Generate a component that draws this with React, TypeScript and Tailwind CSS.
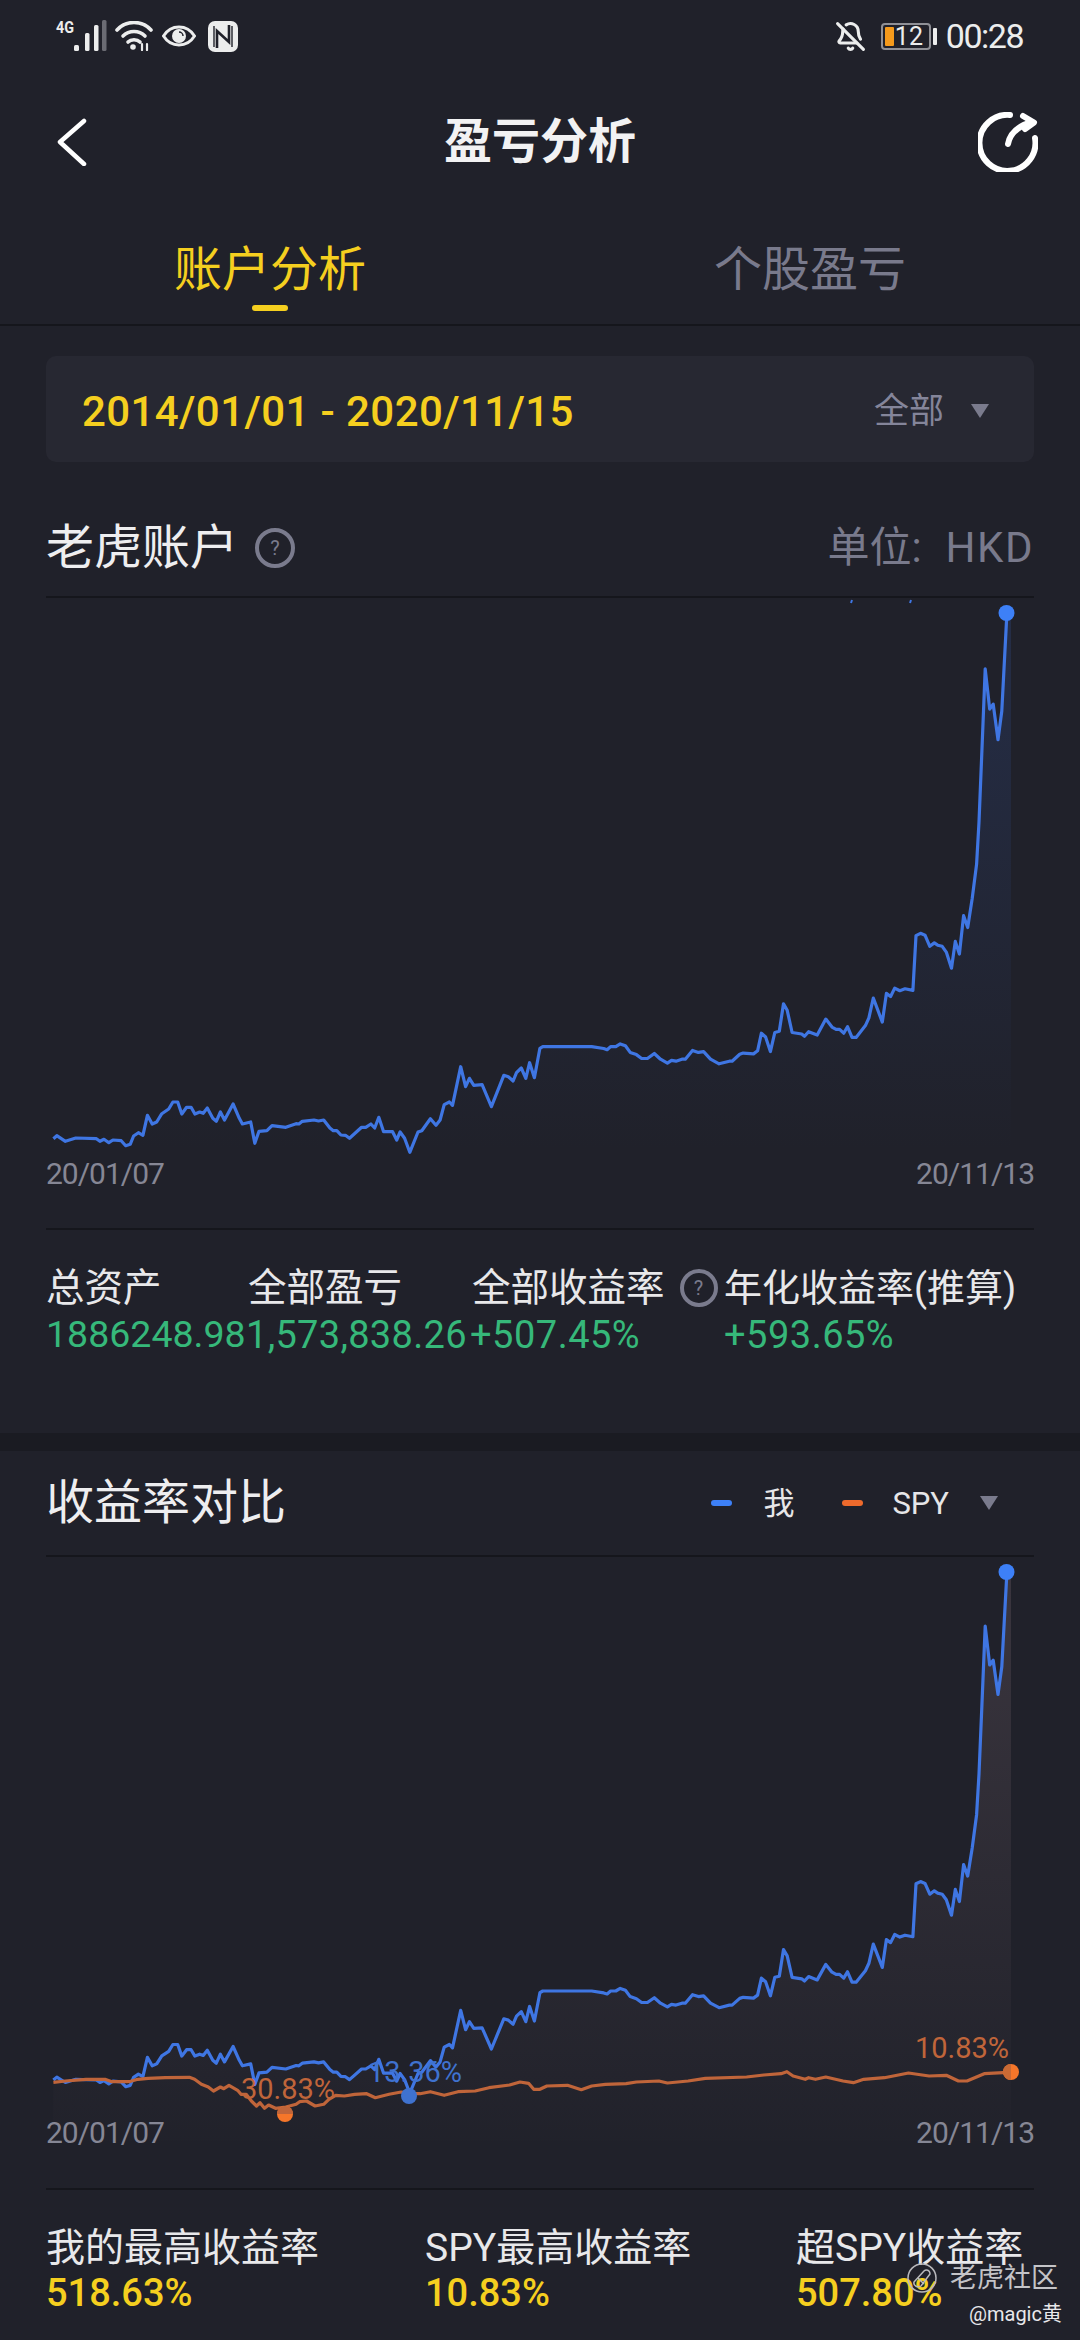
import React from 'react';
import { BellOff } from 'lucide-react';

// traced from the reference, in zoomed crop coordinates
const blueLeft = [[155,716],[165,707],[190,724],[220,714],[280,716],[290,724],[302,718],[316,728],[328,720],[352,722],[365,737],[378,733],[388,708],[402,698],[415,706],[428,646],[442,672],[455,666],[470,641],[490,627],[502,606],[516,606],[528,642],[542,622],[555,622],[566,642],[580,636],[590,640],[602,624],[618,655],[628,664],[640,636],[652,660],[677,612],[695,655],[704,672],[728,666],[740,730],[752,694],[775,692],[790,677],[830,682],[860,671],[868,672],[878,664],[912,660],[925,663],[940,660],[958,684],[968,692],[978,692],[990,705],[1003,706],[1015,715],[1050,682],[1062,682],[1077,672],[1088,684],[1100,652],[1114,695],[1140,695],[1152,720],[1162,696],[1175,715],[1190,757],[1214,696],[1225,692],[1250,656],[1266,676],[1278,660],[1290,614],[1305,606],[1314,616],[1338,500],[1352,560],[1363,535],[1376,556],[1400,554],[1427,620],[1463,526],[1476,530],[1490,543],[1500,518],[1514,504],[1527,535],[1538,488],[1552,533],[1568,445]];
const blueRight = [[8,1167],[150,1167],[185,1172],[195,1175],[205,1167],[220,1167],[233,1160],[248,1165],[262,1182],[280,1188],[295,1198],[312,1198],[332,1185],[350,1200],[370,1210],[382,1203],[395,1205],[412,1200],[422,1200],[443,1177],[460,1182],[475,1180],[495,1200],[520,1212],[550,1205],[558,1205],[580,1187],[590,1184],[620,1186],[632,1178],[643,1132],[655,1142],[669,1180],[682,1130],[695,1127],[707,1055],[718,1072],[732,1130],[760,1134],[768,1140],[780,1128],[805,1137],[830,1095],[848,1116],[860,1122],[870,1122],[882,1132],[893,1115],[906,1143],[918,1143],[945,1112],[955,1092],[968,1040],[994,1103],[1006,1028],[1018,1036],[1030,1014],[1045,1021],[1060,1016],[1083,1020],[1092,877],[1105,871],[1118,876],[1132,905],[1145,896],[1155,902],[1168,905],[1180,920],[1195,962],[1206,892],[1218,925],[1230,825],[1242,856],[1255,780],[1268,690],[1275,580],[1282,420],[1293,180],[1306,285],[1316,272],[1330,365],[1341,290],[1355,50],[1355,35]];
const orangeLeft = [[155,394],[190,390],[250,385],[305,385],[325,392],[375,392],[400,385],[430,382],[480,380],[550,379],[565,385],[585,400],[605,408],[620,420],[640,408],[650,413],[665,403],[690,418],[700,430],[715,430],[730,450],[745,465],[755,455],[768,472],[780,462],[800,472],[830,468],[860,460],[870,452],[890,450],[915,465],[940,460],[955,445],[975,433],[1000,435],[1030,430],[1065,428],[1090,440],[1130,430],[1165,423],[1190,428],[1220,428],[1250,422],[1290,433],[1330,422],[1380,420],[1420,410],[1480,402],[1510,393],[1535,397],[1550,415],[1568,415]];
const orangeRight = [[20,405],[80,403],[120,416],[150,405],[190,400],[250,398],[280,393],[345,390],[370,396],[430,390],[480,382],[600,378],[650,372],[700,368],[717,362],[735,375],[770,385],[780,380],[800,385],[830,378],[880,390],[910,395],[940,385],[1000,380],[1070,366],[1130,375],[1180,373],[1215,390],[1240,390],[1290,368],[1345,365],[1368,364]];

const blue1 = [
  ...blueLeft.map(([x, y]) => [x / 2.904, 900 + y / 3]),
  ...blueRight.map(([x, y]) => [540 + x / 2.904, 600 + y / 2.613]),
];
const blue2 = blue1.map(([x, y]) => [x, 0.966 * y + 979]);
const orange = [
  ...orangeLeft.map(([x, y]) => [x / 2.904, 1950 + y / 3]),
  ...orangeRight.map(([x, y]) => [540 + x / 2.904, 1950 + y / 3]),
];
const pts = (a: number[][]) => a.map(([x, y]) => `${x.toFixed(1)},${y.toFixed(1)}`).join(' ');

const Help = ({ size }: { size: string }) => (
  <span className={`${size} flex items-center justify-center rounded-full border-[4px] border-[#7a7b8d] text-[#7a7b8d] text-[20px] leading-none`}>?</span>
);

const Caret = ({ className }: { className: string }) => (
  <svg className={className} width="18" height="14" viewBox="0 0 18 14"><path d="M0 0H18L9 14Z" fill="#7a7b8d" /></svg>
);

const StatusBar = () => (
  <div className="h-[72px] flex items-center justify-between pl-[56px] pr-[57px]">
    <div className="flex items-center">
      <svg width="52" height="32" viewBox="0 0 52 32" className="overflow-visible">
        <text x="0" y="13" fontSize="17" fontWeight="700" fill="#eceded" textLength="18" lengthAdjust="spacingAndGlyphs">4G</text>
        <rect x="18" y="25" width="5" height="6" rx="1.5" fill="#eceded" />
        <rect x="29" y="13" width="4.5" height="18" rx="1.5" fill="#eceded" />
        <rect x="38" y="5" width="4.5" height="26" rx="1.5" fill="#eceded" />
        <rect x="46" y="0" width="4.5" height="31" rx="1.5" fill="#6b6c74" />
      </svg>
      <svg className="ml-[7px]" width="38" height="30" viewBox="0 0 38 30" fill="none" stroke="#eceded" strokeLinecap="round" strokeWidth="3.6">
        <path d="M2 9C11 -1 27 -1 36 9" />
        <path d="M8 15C14 9 24 9 30 15" />
        <path d="M13 21C16 18 22 18 25 21" />
        <circle cx="18" cy="26" r="2.8" fill="#eceded" stroke="none" />
        <path d="M27 29V23M32 29V23" strokeWidth="2.2" />
      </svg>
      <svg className="ml-[9px]" width="34" height="26" viewBox="0 0 34 26" fill="none">
        <path d="M1.5 13C9 1 25 1 32.5 13C25 25 9 25 1.5 13Z" stroke="#eceded" strokeWidth="3" />
        <circle cx="17" cy="13" r="7" fill="#eceded" />
        <path d="M17 9A4 4 0 0 1 21 13" stroke="#20212a" strokeWidth="1.5" />
      </svg>
      <svg className="ml-[12px]" width="30" height="31" viewBox="0 0 30 31">
        <rect width="30" height="31" rx="7" fill="#eceded" />
        <path d="M9 27V10L21 21V4" fill="none" stroke="#20212a" strokeWidth="2.6" />
        <path d="M6 5V26M24 5V26" fill="none" stroke="#20212a" strokeWidth="1.4" />
      </svg>
    </div>
    <div className="flex items-center">
      <BellOff size={31} strokeWidth={2.4} className="text-[#eceded]" />
      <div className="ml-[15px] w-[50px] h-[27px] rounded-[4px] border-2 border-[#8f9096] flex items-center pl-[2px]">
        <span className="w-[9px] h-[19px] bg-[#f59a1b] rounded-[1px] shrink-0" />
        <span className="ml-[1px] text-[25px] leading-[23px] text-[#eceded]">12</span>
      </div>
      <span className="ml-[2px] w-[4px] h-[17px] bg-[#eceded] rounded-[1px]" />
      <span className="ml-[9px] text-[34px] leading-none text-[#eceded] tracking-[-1.5px]">00:28</span>
    </div>
  </div>
);

const Header = () => (
  <div className="h-[140px] flex items-center justify-between pl-[56px] pr-[42px]">
    <svg className="mr-[14px]" width="32" height="48" viewBox="0 0 32 48" fill="none" stroke="#fff" strokeWidth="4.5" strokeLinecap="round" strokeLinejoin="round">
      <path d="M28 3L4 24L28 46" />
    </svg>
    <h1 className="text-[48px] font-bold text-[#f2f2f3] leading-none">盈亏分析</h1>
    <svg width="60" height="60" viewBox="0 0 60 60" fill="none" stroke="#fff" strokeWidth="6" strokeLinecap="round" strokeLinejoin="round">
      <path d="M32 3A28 28 0 1 0 57 26" />
      <path d="M30 32Q33 16 54 10" />
      <path d="M45 4L56 10.5L47 17" />
    </svg>
  </div>
);

const Tabs = () => (
  <div className="h-[114px] grid grid-cols-2 border-b-2 border-[#15161c]">
    <div className="flex flex-col items-center pt-[33px]">
      <span className="text-[48px] leading-[50px] text-[#f5cf1f]">账户分析</span>
      <span className="mt-[10px] w-[36px] h-[6px] rounded-full bg-[#f5cf1f]" />
    </div>
    <div className="flex justify-center pt-[33px]">
      <span className="text-[48px] leading-[50px] text-[#797a8c]">个股盈亏</span>
    </div>
  </div>
);

const DateCard = () => (
  <div className="mx-[46px] mt-[30px] h-[106px] rounded-[10px] bg-[#272832] flex items-center justify-between pl-[36px] pr-[45px]">
    <span className="pt-[6px] text-[42px] leading-none text-[#f5cf1f] font-medium tracking-[0.4px]">2014/01/01 - 2020/11/15</span>
    <div className="flex items-center pt-[4px]">
      <span className="text-[35px] leading-none text-[#84859a]">全部</span>
      <Caret className="ml-[27px]" />
    </div>
  </div>
);

const ChartOne = () => (
  <svg className="block" width="1080" height="630" viewBox="0 598 1080 630">
    <defs>
      <linearGradient id="fillOne" gradientUnits="userSpaceOnUse" x1="0" y1="600" x2="0" y2="1150">
        <stop offset="0" stopColor="#2a3b66" stopOpacity="0.5" />
        <stop offset="1" stopColor="#2a3b66" stopOpacity="0" />
      </linearGradient>
    </defs>
    <polygon points={`${pts(blue1)} 1011,613 1011,1160 53,1160`} fill="url(#fillOne)" />
    <polyline points={pts(blue1)} fill="none" stroke="#3f76e3" strokeWidth="3.2" strokeLinejoin="round" />
    <path d="M852 600L851 603M911 600L910 603" stroke="#3f76e3" strokeWidth="2" />
    <circle cx="1006.5" cy="613" r="8" fill="#3d80f7" />
    <text x="46" y="1184" fontSize="30" fill="#868795" letterSpacing="-1">20/01/07</text>
    <text x="1034" y="1184" fontSize="30" fill="#868795" textAnchor="end" letterSpacing="-1">20/11/13</text>
  </svg>
);

const ChartTwo = () => (
  <svg className="block" width="1080" height="631" viewBox="0 1556 1080 631">
    <defs>
      <linearGradient id="fillTwo" gradientUnits="userSpaceOnUse" x1="0" y1="1560" x2="0" y2="2160">
        <stop offset="0" stopColor="#a88a92" stopOpacity="0.2" />
        <stop offset="1" stopColor="#a88a92" stopOpacity="0" />
      </linearGradient>
    </defs>
    <polygon points={`${pts(blue2)} 1011,1571 1011,2140 53,2140`} fill="url(#fillTwo)" />
    <polyline points={pts(blue2)} fill="none" stroke="#3f76e3" strokeWidth="3.2" strokeLinejoin="round" />
    <polyline points={pts(orange)} fill="none" stroke="#c0653a" strokeWidth="3.2" strokeLinejoin="round" />
    <circle cx="1006.5" cy="1571" r="8" fill="#3d80f7" />
    <circle cx="285" cy="2113" r="8" fill="#f5762a" />
    <path d="M277 2113A8 8 0 0 1 293 2113Z" fill="#c0653a" />
    <circle cx="409" cy="2095" r="8" fill="#3f72cf" />
    <circle cx="1011" cy="2071" r="8" fill="#f5762a" />
    <path d="M1011 2063A8 8 0 0 0 1011 2079Z" fill="#c96a35" />
    <text x="241" y="2098" fontSize="29" fill="#c0653a">30.83%</text>
    <text x="368" y="2081" fontSize="29" fill="#3f72cf">13.36%</text>
    <text x="915" y="2057" fontSize="29" fill="#c0653a">10.83%</text>
    <text x="46" y="2142" fontSize="30" fill="#868795" letterSpacing="-1">20/01/07</text>
    <text x="1034" y="2142" fontSize="30" fill="#868795" textAnchor="end" letterSpacing="-1">20/11/13</text>
  </svg>
);

const Legend = () => (
  <div className="flex items-center text-[31px] leading-none text-[#e6e6e8]">
    <span className="w-[21px] h-[6px] rounded-full bg-[#3d80f7]" />
    <span className="ml-[31px]">我</span>
    <span className="ml-[48px] w-[21px] h-[6px] rounded-full bg-[#ee6a2c]" />
    <span className="ml-[29px]">SPY</span>
    <Caret className="ml-[31px]" />
  </div>
);

export default function App() {
  return (
    <div className="w-[1080px] h-[2340px] overflow-hidden bg-[#20212a] font-['Roboto','Noto_Sans_CJK_SC',sans-serif] relative">
      <StatusBar />
      <Header />
      <Tabs />
      <DateCard />

      <div className="mx-[46px] h-[134px] flex items-center justify-between pt-[38px]">
        <div className="flex items-center">
          <h2 className="text-[48px] leading-none text-[#eeeef0]">老虎账户</h2>
          <Help size="ml-[17px] w-[40px] h-[40px]" />
        </div>
        <span className="text-[42px] leading-none text-[#797a8c] flex items-center">单位:<span className="ml-[24px] tracking-[1.5px]">HKD</span></span>
      </div>

      <div className="mx-[46px] h-[2px] bg-[#15161c]" />
      <ChartOne />
      <div className="mx-[46px] h-[2px] bg-[#15161c]" />

      <div className="mx-[46px] h-[203px] grid grid-cols-[200px_224px_254px_1fr] grid-rows-[44px_50px] pt-[36px] text-[38.5px] leading-none whitespace-nowrap">
        <span className="text-[#e8e8ea] self-center">总资产</span>
        <span className="text-[#e8e8ea] self-center pl-[2px]">全部盈亏</span>
        <span className="text-[#e8e8ea] self-center pl-[2px] flex items-center">全部收益率<Help size="ml-[15px] w-[38px] h-[38px] shrink-0" /></span>
        <span className="text-[#e8e8ea] self-center text-[38px]">年化收益率(推算)</span>
        <span className="text-[#36b87a] self-center text-[37.5px]">1886248.98</span>
        <span className="text-[#36b87a] self-center text-[38px] tracking-[0.3px]">1,573,838.26</span>
        <span className="text-[#36b87a] self-center text-[38px] tracking-[0.5px]">+507.45%</span>
        <span className="text-[#36b87a] self-center text-[38px] tracking-[0.5px]">+593.65%</span>
      </div>

      <div className="h-[18px] bg-[#1a1b22]" />

      <div className="mx-[46px] h-[104px] flex items-center justify-between pr-[36px]">
        <h2 className="text-[48px] leading-none text-[#eeeef0]">收益率对比</h2>
        <Legend />
      </div>

      <div className="mx-[46px] h-[2px] bg-[#15161c]" />
      <ChartTwo />
      <div className="mx-[46px] h-[2px] bg-[#15161c]" />

      <div className="mx-[46px] grid grid-cols-[379px_371px_1fr] grid-rows-[44px_46px] pt-[36px] text-[39px] leading-none whitespace-nowrap">
        <span className="text-[#e8e8ea] self-center">我的最高收益率</span>
        <span className="text-[#e8e8ea] self-center">SPY最高收益率</span>
        <span className="text-[#e8e8ea] self-center">超SPY收益率</span>
        <span className="text-[#f5cf1f] self-center text-[38px] font-medium">518.63%</span>
        <span className="text-[#f5cf1f] self-center text-[38px] font-medium">10.83%</span>
        <span className="text-[#f5cf1f] self-center text-[38px] font-medium">507.80%</span>
      </div>

      {/* community watermark */}
      <div className="absolute left-[907px] top-[2263px] flex items-center">
        <svg width="30" height="30" viewBox="0 0 30 30" fill="none" stroke="#b9b9bd" strokeWidth="1.5">
          <circle cx="15" cy="15" r="14" />
          <path d="M7 19L17 8C19 6 23 7 23 11L14 23C11 25 6 23 7 19Z" />
          <path d="M11 15L17 21" />
        </svg>
        <span className="ml-[13px] text-[27px] leading-none text-[#c4c4c8]">老虎社区</span>
      </div>
      <span className="absolute left-[969px] top-[2304px] text-[20px] leading-none text-[#e8e8ea]">@magic黄</span>
    </div>
  );
}
